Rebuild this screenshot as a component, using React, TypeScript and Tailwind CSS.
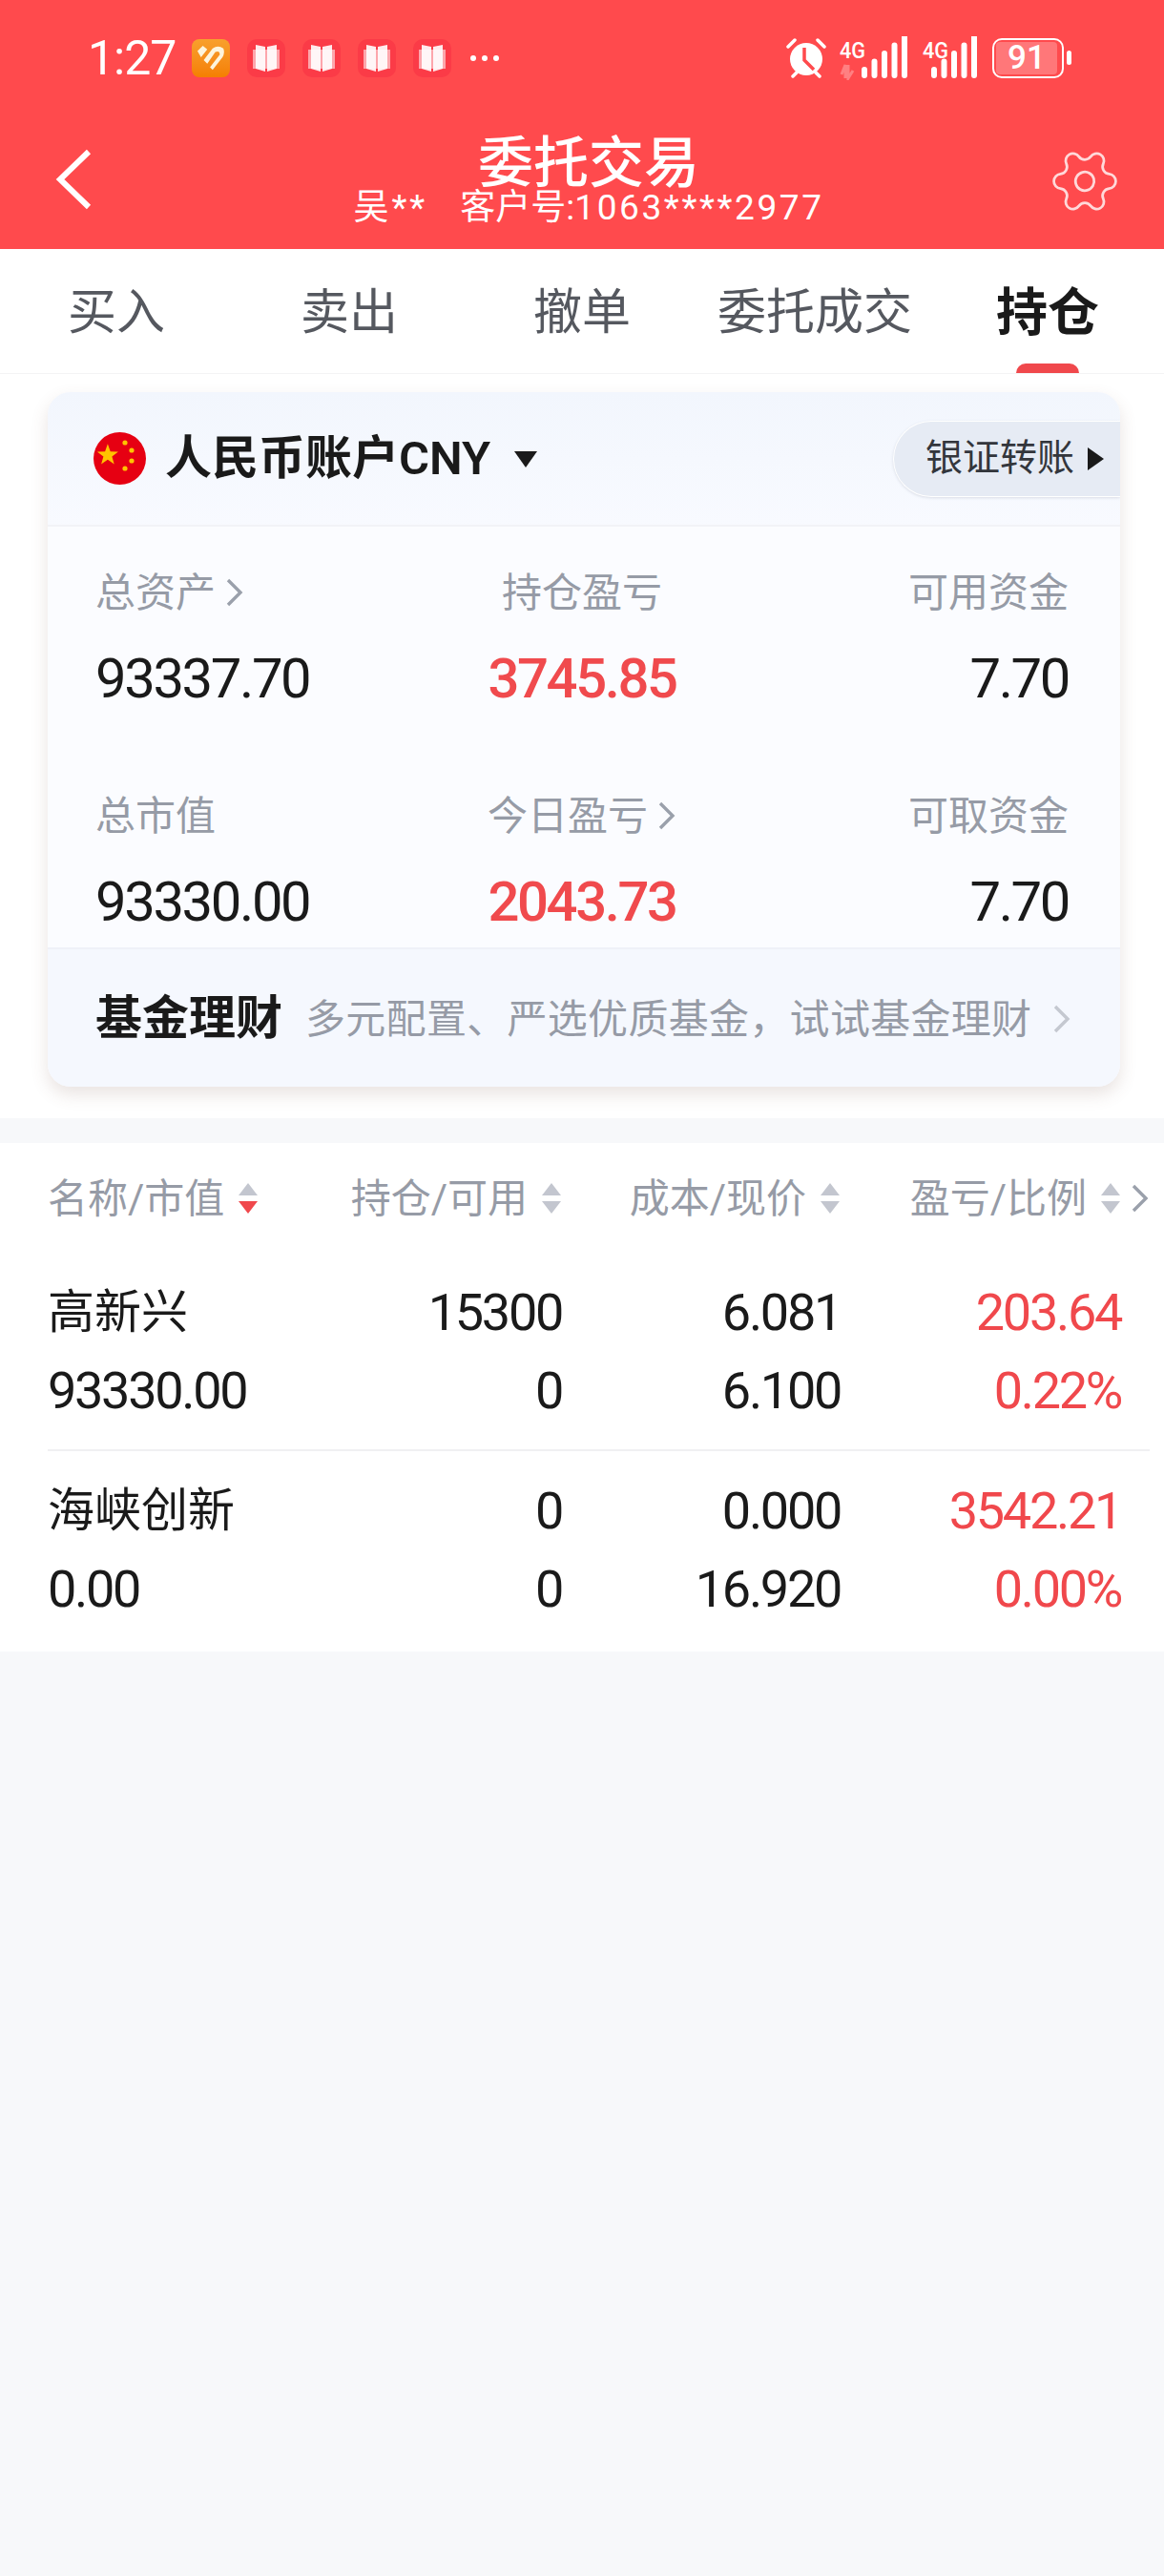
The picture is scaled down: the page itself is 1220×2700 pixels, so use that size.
import { Settings } from "lucide-react";

const FONT = "font-['Roboto','Noto_Sans_CJK_SC',sans-serif]";

function BookIcon() {
  return (
    <div className="w-[40px] h-[40px] rounded-[10px] bg-[#fb3b47] flex items-center justify-center">
      <svg width="28" height="30" viewBox="0 0 28 30">
        <rect x="0" y="6" width="28" height="20" fill="#ffffff" opacity="0.55" />
        <path d="M3 1 L13 3 V29 L3 26 Z" fill="#ffffff" opacity="0.9" />
        <path d="M25 1 L15 3 V29 L25 26 Z" fill="#ffffff" opacity="0.9" />
      </svg>
    </div>
  );
}

function AppIcon() {
  return (
    <div className="w-[40px] h-[40px] rounded-[8px] bg-gradient-to-b from-[#f8a02c] to-[#f57f00] flex items-center justify-center">
      <svg width="30" height="30" viewBox="0 0 32 32">
        <path d="M1 8 L7 2 L12 6 L5 15 Z" fill="#fdf4dc" />
        <path d="M8 18 L18 5 Q24 1 30 5 Q32 10 29 15 L18 29 L15 26 L26 12 Q26 7 21 9 L12 22 Z" fill="#fdf4dc" />
      </svg>
    </div>
  );
}

function AlarmIcon() {
  return (
    <svg width="42" height="42" viewBox="0 0 42 42">
      <path d="M2 9 L9 2" stroke="#fff" strokeWidth="3.5" strokeLinecap="round" />
      <path d="M40 9 L33 2" stroke="#fff" strokeWidth="3.5" strokeLinecap="round" />
      <path d="M7 40 L11 36" stroke="#fff" strokeWidth="3.5" strokeLinecap="round" />
      <path d="M35 40 L31 36" stroke="#fff" strokeWidth="3.5" strokeLinecap="round" />
      <circle cx="21" cy="22" r="17" fill="#fff" />
      <path d="M19 10 V23 L29 33" stroke="#ff4a4d" strokeWidth="3.5" fill="none" />
    </svg>
  );
}

function Signal({ width, arrows }: { width: number; arrows?: boolean }) {
  const bars = [0, 1, 2, 3, 4];
  const start = width - 48;
  return (
    <svg width={width} height="46" viewBox={`0 0 ${width} 46`}>
      <text x="0" y="23" fontSize="24" fontWeight="500" fill="#fff" fontFamily="Roboto" textLength="27" lengthAdjust="spacingAndGlyphs">
        4G
      </text>
      {arrows && <path d="M2 40 L6 30 V44 M9 30 V44 L14 36" stroke="#ffffff" strokeOpacity="0.3" strokeWidth="3" fill="none" />}
      {bars.map((b) => {
        const h = b === 0 ? 12 : 12 + b * 8.5;
        return <rect key={b} x={start + b * 10.5} y={44 - h} width="6" height={h} rx="3" fill="#fff" />;
      })}
    </svg>
  );
}

function StatusBar() {
  return (
    <div className="h-[120px] flex items-center justify-between pl-[92px] pr-[97px] pt-[1px]">
      <div className="flex items-center">
        <span className="text-[50px] leading-none text-white w-[109px] tracking-[-1px]">1:27</span>
        <div className="flex items-center gap-[18px]">
          <AppIcon />
          <BookIcon />
          <BookIcon />
          <BookIcon />
          <BookIcon />
        </div>
        <div className="flex gap-[6px] ml-[20px]">
          <span className="w-[6px] h-[6px] rounded-full bg-white" />
          <span className="w-[6px] h-[6px] rounded-full bg-white" />
          <span className="w-[6px] h-[6px] rounded-full bg-white" />
        </div>
      </div>
      <div className="flex items-center">
        <AlarmIcon />
        <div className="w-[14px]" />
        <Signal width={71} arrows />
        <div className="w-[16px]" />
        <Signal width={57} />
        <div className="w-[16px]" />
        <div className="w-[75px] h-[42px] rounded-[10px] border-[2.5px] border-white p-[2px]">
          <div className="w-[64px] h-full rounded-[4px] bg-white/25 flex items-center justify-center text-[35px] font-medium leading-none text-white">
            91
          </div>
        </div>
        <div className="w-[5px] h-[15px] ml-[3px] rounded-full bg-white" />
      </div>
    </div>
  );
}

function Header() {
  return (
    <div className="h-[141px] grid grid-cols-[1fr_auto_1fr] items-center pl-[58px] pr-[44px]">
      <svg width="38" height="64" viewBox="0 0 38 64" className="-mt-[5px]">
        <path d="M35 3 L5 32 L35 61" stroke="#fff" strokeWidth="6" fill="none" />
      </svg>
      <div className="flex flex-col items-center text-white -mt-[4px]">
        <div className="text-[58px] leading-[58px] font-medium">委托交易</div>
        <div className="flex text-[37px] leading-[36px] whitespace-nowrap">
          <span className="tracking-[3px]">吴**</span>
          <span className="ml-[34px]">客户号:</span>
          <span className="tracking-[2.6px]">1063****2977</span>
        </div>
      </div>
      <Settings size={78} strokeWidth={0.85} color="#ffd9da" className="justify-self-end rotate-[30deg] -mt-[2px]" />
    </div>
  );
}

function Tabs() {
  const tabs = ["买入", "卖出", "撤单", "委托成交", "持仓"];
  return (
    <div className="h-[131px] grid grid-cols-5 bg-white border-b border-[#f4f4f5]">
      {tabs.map((t, i) => {
        const active = i === tabs.length - 1;
        return (
          <div key={t} className="relative flex items-center justify-center pt-[4px]">
            <span className={active ? "text-[54px] font-semibold text-[#1a1a1a]" : "text-[51px] text-[#55585f]"}>{t}</span>
            {active && <span className="absolute bottom-0 left-1/2 -translate-x-1/2 w-[66px] h-[10px] rounded-t-full bg-[#f0484c]" />}
          </div>
        );
      })}
    </div>
  );
}

function Chevron({ className, light }: { className?: string; light?: boolean }) {
  return (
    <svg width="20" height="32" viewBox="0 0 20 32" className={`shrink-0 ${className ?? ""}`}>
      <path d="M3 3 L16 16 L3 29" stroke={light ? "#c4c8d0" : "#9aa0ab"} strokeWidth="3.4" fill="none" />
    </svg>
  );
}

function Stat({ label, value, align, red, arrow }: { label: string; value: string; align: string; red?: boolean; arrow?: boolean }) {
  return (
    <div className={`flex flex-col ${align}`}>
      <div className="h-[50px] flex items-center gap-[10px] text-[42px] text-[#969ba6]">
        {label}
        {arrow && <Chevron />}
      </div>
      <div className={`h-[60px] mt-[35px] flex items-center text-[58px] tracking-[-2.4px] ${red ? "font-medium text-[#f04a4d]" : "text-[#1a1a1a]"}`}>
        {value}
      </div>
    </div>
  );
}

function AccountCard() {
  return (
    <div className="ml-[50px] mr-[46px] rounded-[24px] bg-[#fbfcff] shadow-[0_8px_18px_rgba(120,80,70,0.16)] overflow-hidden">
      <div className="h-[141px] flex items-center justify-between bg-gradient-to-b from-[#f2f6fd] to-[#f8faff] border-b-2 border-[#f2f3f7] pl-[48px]">
        <div className="flex items-center">
          <svg width="55" height="55" viewBox="0 0 55 55">
            <circle cx="27.5" cy="27.5" r="27.5" fill="#e60012" />
            <path d="M14 12 L17.3 21.5 L27 21.7 L19.3 27.7 L22 37 L14 31.5 L6 37 L8.7 27.7 L1 21.7 L10.7 21.5 Z" fill="#ffc400" transform="translate(3 2) scale(0.85)" />
            <circle cx="33" cy="11" r="2.6" fill="#ffc400" />
            <circle cx="40" cy="19" r="2.6" fill="#ffc400" />
            <circle cx="40" cy="30" r="2.6" fill="#ffc400" />
            <circle cx="33" cy="38" r="2.6" fill="#ffc400" />
          </svg>
          <span className="ml-[20px] text-[49px] font-semibold text-[#1a1a1a]">人民币账户CNY</span>
          <svg width="24" height="18" viewBox="0 0 24 18" className="ml-[25px]">
            <path d="M0 1 H24 L12 18 Z" fill="#1a1a1a" />
          </svg>
        </div>
        <div className="w-[238px] h-[80px] rounded-l-full bg-[#e6ebf4] border border-white border-r-0 shadow-[0_1px_3px_rgba(100,110,130,0.2)] flex items-center pl-[33px]">
          <span className="text-[39px] text-[#33363c]">银证转账</span>
          <svg width="17" height="24" viewBox="0 0 17 24" className="ml-[14px]">
            <path d="M0 0 L17 12 L0 24 Z" fill="#1a1a1a" />
          </svg>
        </div>
      </div>
      <div className="grid grid-cols-3 pl-[50px] pr-[54px] pt-[44px] gap-y-[71px] h-[441px]">
        <Stat label="总资产" value="93337.70" align="items-start" arrow />
        <Stat label="持仓盈亏" value="3745.85" align="items-center" red />
        <Stat label="可用资金" value="7.70" align="items-end" />
        <Stat label="总市值" value="93330.00" align="items-start" />
        <Stat label="今日盈亏" value="2043.73" align="items-center" red arrow />
        <Stat label="可取资金" value="7.70" align="items-end" />
      </div>
      <div className="h-[146px] flex items-center border-t-2 border-[#eff1f8] bg-[#f5f8fe] pl-[50px] pr-[51px] pt-[2px]">
        <span className="text-[49px] font-bold text-[#1a1a1a]">基金理财</span>
        <span className="ml-[24px] flex-1 text-[42px] tracking-[0.3px] text-[#969ba6] whitespace-nowrap">多元配置、严选优质基金，试试基金理财</span>
        <Chevron light />
      </div>
    </div>
  );
}

function SortIcon({ active }: { active?: boolean }) {
  return (
    <svg width="22" height="34" viewBox="0 0 22 34" className="shrink-0">
      <path d="M11 1 L21 14 H1 Z" fill="#c3c6cf" />
      <path d="M1 20 H21 L11 33 Z" fill={active ? "#f0484c" : "#c3c6cf"} />
    </svg>
  );
}

function HoldingsTable() {
  const rows = [
    { name: "高新兴", value: "93330.00", hold: "15300", free: "0", cost: "6.081", price: "6.100", pnl: "203.64", pct: "0.22%" },
    { name: "海峡创新", value: "0.00", hold: "0", free: "0", cost: "0.000", price: "16.920", pnl: "3542.21", pct: "0.00%" },
  ];
  return (
    <div className="bg-white">
      <div className="h-[112px] grid grid-cols-[330px_209px_292px_294px] pl-[50px] items-center text-[42px] text-[#969ba6] pt-[4px]">
        <div className="flex items-center gap-[14px]">
          名称/市值
          <SortIcon active />
        </div>
        <div className="flex items-center justify-end gap-[14px] whitespace-nowrap">
          持仓/可用
          <SortIcon />
        </div>
        <div className="flex items-center justify-end gap-[14px] whitespace-nowrap">
          成本/现价
          <SortIcon />
        </div>
        <div className="relative flex items-center justify-end gap-[14px] whitespace-nowrap">
          盈亏/比例
          <SortIcon />
          <Chevron className="absolute -right-[30px]" />
        </div>
      </div>
      {rows.map((r, i) => (
        <div key={r.name} className={i === 0 ? "h-[211px] ml-[50px] mr-[15px] pt-[25px] border-b-2 border-[#f0f0f2]" : "h-[210px] ml-[50px] mr-[15px] pt-[22px]"}>
          <div className="grid grid-cols-[330px_209px_292px_294px] text-[54px] leading-[82px] tracking-[-2.3px] text-[#1a1a1a]">
            <div className="text-[49px] tracking-normal">{r.name}</div>
            <div className="text-right">{r.hold}</div>
            <div className="text-right">{r.cost}</div>
            <div className="text-right text-[#f0484c]">{r.pnl}</div>
            <div>{r.value}</div>
            <div className="text-right">{r.free}</div>
            <div className="text-right">{r.price}</div>
            <div className="text-right text-[#f0484c]">{r.pct}</div>
          </div>
        </div>
      ))}
    </div>
  );
}

export default function App() {
  return (
    <div className={`w-[1220px] min-h-[2700px] bg-[#f7f8fa] ${FONT}`}>
      <div className="bg-[#ff4a4d]">
        <StatusBar />
        <Header />
      </div>
      <Tabs />
      <div className="bg-white h-[780px] pt-[19px]">
        <AccountCard />
      </div>
      <div className="h-[26px]" />
      <HoldingsTable />
    </div>
  );
}
